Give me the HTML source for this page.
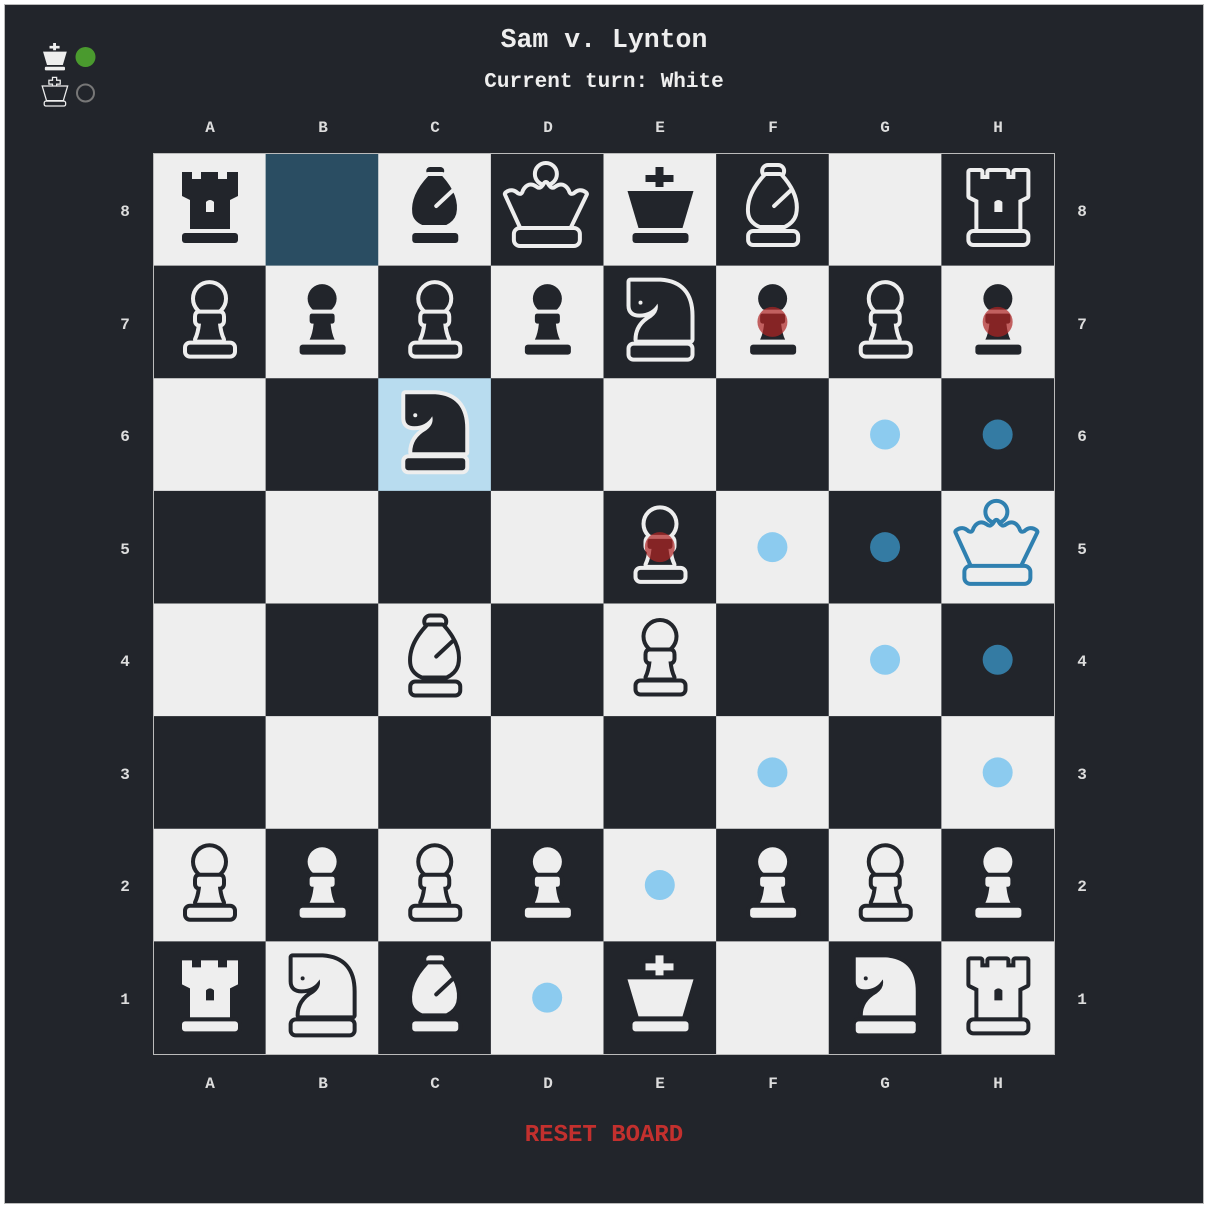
<!DOCTYPE html>
<html><head><meta charset="utf-8"><style>
html,body{margin:0;padding:0;background:#fff;}
body{width:1207px;height:1207px;position:relative;overflow:hidden;font-family:"Liberation Mono",monospace;}
#frame{position:absolute;left:4px;top:4px;width:1198px;height:1198px;background:#22252b;border:1px solid #bbb;}
.t{position:absolute;color:#eee;font-weight:bold;text-align:center;}
.lab{position:absolute;color:#ddd;font-size:16px;font-weight:bold;width:30px;text-align:center;font-family:"Liberation Mono",monospace;}
</style></head><body>
<div id="frame"></div>
<div class="t" style="left:404px;top:25px;width:400px;font-size:26.5px;">Sam v. Lynton</div>
<div class="t" style="left:404px;top:71px;width:400px;font-size:21px;">Current turn: White</div>
<div class="t" style="left:404px;top:1122px;width:400px;font-size:24px;color:#c3302e;">RESET BOARD</div>
<div class="lab" style="left:195px;top:119px">A</div><div class="lab" style="left:308px;top:119px">B</div><div class="lab" style="left:420px;top:119px">C</div><div class="lab" style="left:533px;top:119px">D</div><div class="lab" style="left:645px;top:119px">E</div><div class="lab" style="left:758px;top:119px">F</div><div class="lab" style="left:870px;top:119px">G</div><div class="lab" style="left:983px;top:119px">H</div>
<div class="lab" style="left:195px;top:1075px">A</div><div class="lab" style="left:308px;top:1075px">B</div><div class="lab" style="left:420px;top:1075px">C</div><div class="lab" style="left:533px;top:1075px">D</div><div class="lab" style="left:645px;top:1075px">E</div><div class="lab" style="left:758px;top:1075px">F</div><div class="lab" style="left:870px;top:1075px">G</div><div class="lab" style="left:983px;top:1075px">H</div>
<div class="lab" style="left:110px;top:203px">8</div><div class="lab" style="left:110px;top:316px">7</div><div class="lab" style="left:110px;top:428px">6</div><div class="lab" style="left:110px;top:541px">5</div><div class="lab" style="left:110px;top:653px">4</div><div class="lab" style="left:110px;top:766px">3</div><div class="lab" style="left:110px;top:878px">2</div><div class="lab" style="left:110px;top:991px">1</div>
<div class="lab" style="left:1067px;top:203px">8</div><div class="lab" style="left:1067px;top:316px">7</div><div class="lab" style="left:1067px;top:428px">6</div><div class="lab" style="left:1067px;top:541px">5</div><div class="lab" style="left:1067px;top:653px">4</div><div class="lab" style="left:1067px;top:766px">3</div><div class="lab" style="left:1067px;top:878px">2</div><div class="lab" style="left:1067px;top:991px">1</div>
<svg style="position:absolute;left:40px;top:40px" width="70" height="70" viewBox="0 0 70 70">
<g transform="translate(-5.6,-2) scale(0.36)" fill="#eee" stroke="#22252b" stroke-width="8" paint-order="stroke"><path d="M52,14h8v8h10v7h-10v9h-8v-9h-10v-7h10z"/><path d="M24,38h66l-11,37h-44z"/><rect x="29" y="80" width="56" height="10" rx="3"/></g>
<circle cx="45.5" cy="17" r="10" fill="#4a9a2e"/>
<g transform="translate(-5.6,33) scale(0.36)" fill="#22252b" stroke="#eee" stroke-width="7" paint-order="stroke"><path d="M52,14h8v8h10v7h-10v9h-8v-9h-10v-7h10z"/><path d="M24,38h66l-11,37h-44z"/><rect x="29" y="80" width="56" height="10" rx="3"/></g>
<circle cx="45.5" cy="53" r="8.5" fill="none" stroke="#777" stroke-width="2"/>
</svg>
<svg id="b" style="position:absolute;left:153px;top:153px" width="902" height="902" viewBox="0 0 902 902"></svg>
<script>
var S=112.625,L='#eeeeee',D='#22252b';
var sh={
P:'<circle cx="56.5" cy="33" r="14.5"/><path d="M46,48h21q2,0 2,3v4q0,3 -3,3h-1q1,10 4,16h-25q3,-6 4,-16h-1q-3,0 -3,-3v-4q0,-3 2,-3z"/><rect x="34" y="79" width="46" height="10" rx="3"/>',
R:'<path d="M29,19h10v7h9v-7h17v7h9v-7h11v24l-8,4v29h-40v-29l-8,-4z"/><path d="M53,49q4,-4 8,0v10h-8z" data-h="1"/><rect x="29" y="80" width="56" height="10" rx="3"/>',
B:'<rect x="48" y="14" width="18" height="8" rx="4"/><path d="M50,23h14q18,20 14,38q-2,7 -10,11h-24q-9,-4 -10,-12q-2,-18 16,-37z"/><line x1="58" y1="53" x2="74" y2="38" data-l="1"/><rect x="34" y="80" width="46" height="10" rx="3"/>',
Q:'<circle cx="55" cy="21" r="9"/><path d="M16,41q5,-4 10,1q6,3 8,-4q4,-7 10,-3q6,5 11,-4q5,9 11,4q6,-4 10,3q2,7 8,4q5,-5 10,-1l-17,35h-45z"/><rect x="25" y="77" width="62" height="14" rx="4"/>',
K:'<path d="M52,14h8v8h10v7h-10v9h-8v-9h-10v-7h10z"/><path d="M24,38h66l-11,37h-44z"/><rect x="29" y="80" width="56" height="10" rx="3"/>',
N:'<path d="M27,16h30q30,2 30,34v24h-53q0,-14 14,-22q8,-6 6,-14q-6,10 -18,10q-9,0 -9,-8z"/><circle cx="37" cy="37" r="2" data-e="1"/><rect x="27" y="80" width="60" height="12" rx="3"/>'
};
var board=[
'bR . bB bQ bK bB . bR',
'bP bP bP bP bN bP bP bP',
'. . bN . . . . .',
'. . . . bP . . wQ',
'. . wB . wP . . .',
'. . . . . . . .',
'wP wP wP wP . wP wP wP',
'wR wN wB . wK . wN wR'];
var dots=['g6','h6','f5','g5','g4','h4','f3','h3','e2','d1'],caps=['f7','h7','e5'];
var o='';
for(var r=0;r<8;r++)for(var c=0;c<8;c++){
 var x=c*S,y=r*S,light=(r+c)%2==0,col=light?L:D;
 var sq=String.fromCharCode(97+c)+(8-r);
 if(sq=='b8')col='#2a4d62';if(sq=='c6')col='#b8dcef';
 o+='<rect x="'+x+'" y="'+y+'" width="'+(S+0.6)+'" height="'+(S+0.6)+'" fill="'+col+'"/>';
}
for(var r=0;r<8;r++){var row=board[r].split(' ');for(var c=0;c<8;c++){
 var p=row[c],x=c*S,y=r*S,sq=String.fromCharCode(97+c)+(8-r);
 if(p!='.'){var w=p[0]=='w',f=w?L:D,s=w?D:L;if(sq=='h5')s='#2f80b0';
  var g=sh[p[1]].replace(/<(\w+)([^>]*?)( data-(\w)="1")?\/>/g,function(m,t,a,dd,k){
   if(k=='l')return '<'+t+a+' stroke="'+s+'" stroke-width="4" stroke-linecap="round"/>';
   if(k=='h'||k=='e')return '<'+t+a+' fill="'+s+'" stroke="none"/>';
   return '<'+t+a+'/>';});
  o+='<g transform="translate('+x+','+y+')" fill="'+f+'" stroke="'+s+'" stroke-width="8" stroke-linejoin="round" paint-order="stroke">'+g+'</g>';}
 if(dots.indexOf(sq)>=0){var lt=(r+c)%2==0;o+='<circle cx="'+(x+56.3)+'" cy="'+(y+56.3)+'" r="15" fill="'+(lt?'#8ccbef':'#347ba3')+'"/>';}
 if(caps.indexOf(sq)>=0)o+='<circle cx="'+(x+56.3)+'" cy="'+(y+56.3)+'" r="15" fill="rgba(175,35,35,0.7)"/>';
}}
o+='<rect x="0.5" y="0.5" width="901" height="901" fill="none" stroke="#bbb" stroke-width="1"/>';
document.getElementById('b').innerHTML=o;
</script>
</body></html>
